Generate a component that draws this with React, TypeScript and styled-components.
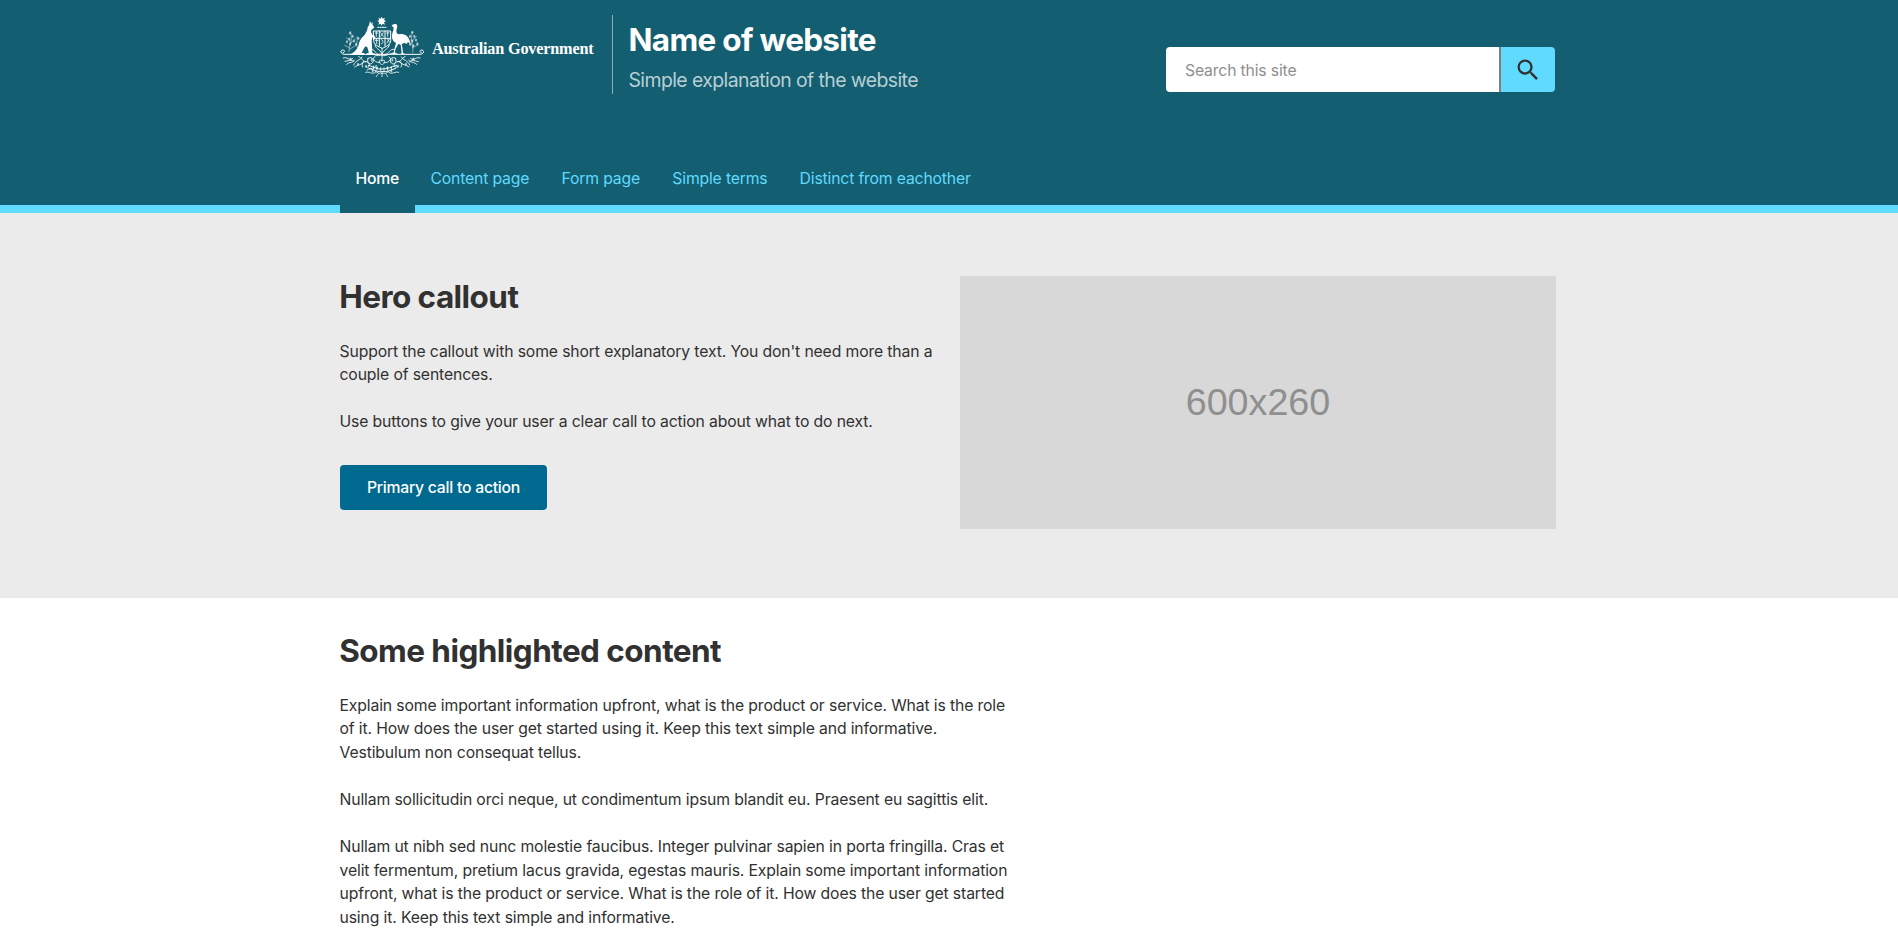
import React from 'react';
import styled, { createGlobalStyle } from 'styled-components';

const GlobalStyle = createGlobalStyle`
  *, *::before, *::after { box-sizing: border-box; }
  html, body { margin: 0; padding: 0; background: #fff; }
  body {
    height: 946px;
    overflow: hidden;
    color: #313131;
    font-family: Inter, 'Liberation Sans', sans-serif;
    font-size: 15.75px;
    line-height: 23.6px;
    letter-spacing: -0.135px;
  }
  h1, h2, p, ul { margin: 0; padding: 0; }
`;

const Container = styled.div`
  width: 1218px;
  margin: 0 auto;
  padding-right: 2px;
`;

const Header = styled.header`
  height: 213px;
  background: #135e70;
  border-bottom: 8px solid #61daff;
`;

const HeaderTop = styled.div`
  display: flex;
  justify-content: space-between;
  height: 148px;
  padding: 15px 1px 0 0;
`;

const Brand = styled.a`
  display: flex;
  align-items: flex-start;
  color: #fff;
  text-decoration: none;
`;

const CrestArt = styled.svg`
  display: block;
  flex: none;
  width: 86px;
  height: 64px;
  fill: #fff;
  stroke: #fff;
  stroke-linecap: round;
  stroke-linejoin: round;
`;

const GovernmentName = styled.span`
  width: 180px;
  margin-left: 6px;
  padding-top: 22px;
  font: bold 17.3px/24px 'Liberation Serif', serif;
  letter-spacing: -0.19px;
  white-space: nowrap;
  transform: scaleX(0.938);
  transform-origin: 0 0;
`;

const Titles = styled.div`
  height: 79.3px;
  padding: 4.8px 0 0 15.5px;
  border-left: 1px solid #89afb8;
  white-space: nowrap;
`;

const SiteName = styled.h1`
  font-size: 31.5px;
  line-height: 39.4px;
  font-weight: 700;
  letter-spacing: -0.7px;
`;

const Tagline = styled.p`
  margin-top: 6.4px;
  color: #b8cfd4;
  font-size: 19.4px;
  line-height: 29.5px;
  letter-spacing: -0.57px;
`;

const SearchForm = styled.form`
  display: flex;
  width: 389px;
  height: 45px;
  margin-top: 32px;
  border-radius: 4px;
  overflow: hidden;
`;

const SearchInput = styled.input`
  flex: 1;
  min-width: 0;
  padding: 2px 19px 0;
  border: 0;
  background: #fff;
  font: inherit;
  letter-spacing: -0.16px;
  &::placeholder { color: #8f8f8f; opacity: 1; }
`;

const SearchButton = styled.button`
  display: flex;
  align-items: center;
  justify-content: center;
  width: 56px;
  padding: 0;
  border: 0;
  border-left: 2px solid #808080;
  background: #61daff;
`;

const SearchIcon = styled.svg`
  width: 28px;
  height: 28px;
  fill: #313131;
`;

const Nav = styled.ul`
  display: flex;
  list-style: none;
`;

const NavItem = styled.li<{ $active?: boolean; $width: number }>`
  width: ${p => p.$width}px;
  height: ${p => (p.$active ? 65 : 57)}px;
  padding: 18.8px 0 0 15.5px;
  background: #135e70;
  color: ${p => (p.$active ? '#fff' : '#61daff')};
  font-weight: ${p => (p.$active ? 500 : 400)};
  letter-spacing: ${p => (p.$active ? -0.24 : -0.17)}px;
  white-space: nowrap;
`;

const Hero = styled.section`
  height: 385px;
  padding-top: 63px;
  background: #ebebeb;
`;

const HeroGrid = styled.div`
  display: grid;
  grid-template-columns: 596px 596px;
  column-gap: 24px;
`;

const HeroText = styled.div`
  padding-top: 0.6px;
`;

const Heading = styled.h2`
  margin: 0 0 23.7px -0.8px;
  font-size: 31.5px;
  line-height: 39.4px;
  font-weight: 700;
  letter-spacing: -0.55px;
`;

const Paragraph = styled.p`
  margin-left: -0.5px;
  white-space: nowrap;
  & + & { margin-top: 23.6px; }
`;

const ActionButton = styled.a`
  display: flex;
  align-items: center;
  justify-content: center;
  width: 207px;
  height: 45px;
  margin-top: 31px;
  padding-top: 0.6px;
  border-radius: 4px;
  background: #00698f;
  color: #fff;
  font-weight: 500;
  letter-spacing: -0.24px;
`;

const Placeholder = styled.div`
  display: flex;
  align-items: center;
  justify-content: center;
  height: 253.3px;
  background: #d8d8d8;
  color: #8f8f8f;
  font-family: 'Liberation Sans', Arial, sans-serif;
  font-size: 37.7px;
  letter-spacing: 0;
`;

const Content = styled.main`
  padding-top: 32.6px;
`;

const leafSpots = [
  [60, 82], [68, 92], [58, 100], [72, 106], [60, 115], [78, 116], [85, 98], [51, 108],
  [247, 80], [240, 92], [253, 92], [247, 106], [258, 103], [240, 116], [250, 120], [262, 114],
  [62, 160], [84, 176], [108, 182], [125, 163], [140, 186], [128, 196],
  [250, 160], [228, 176], [204, 182], [187, 163], [172, 186], [184, 196],
];

const Crest = () => (
  <CrestArt viewBox="30 28 258 192" aria-label="Coat of arms">
    <path stroke="none" d="M155 33l3 6 7-3-3 7 6 3-6 4 3 7-7-3-3 6-3-6-7 3 3-7-6-4 6-3-3-7 7 3z" />
    <path fill="none" strokeWidth="3" d="M143 65h25" strokeDasharray="4 3" />
    <path stroke="none" d="M120 46l4 8 3-6 1 10 5 7-5 5-4 2-1 7 4 8 7 4 3 8-3 3-6-8-3 10 1 17 1 20 9 4v3h-26l7-6-5-17-6-3-7 12-4 8h8v6H56c14-4 24-14 29-26 2-16 8-25 16-31 7-8 11-16 12-26l4-6z" />
    <path stroke="none" d="M185 61c2-5 9-8 14-5 4 3 3 8 1 14-2 8-1 13 5 16 13-3 24 1 30 10 3 5 4 11 6 17l-8-4-4 6-6-4-8 5 2 9 2 17 6 3h-13l3-3-3-25-7-2-8 14-3 13 5 3h-13l5-4 3-15 4-14c-8-4-13-12-12-22 0-9 5-14 5-23l-2-4z" />
    <g fill="none">
      <path strokeWidth="3" d="M131 76h51v29c0 12-14 18-25 23-12-5-26-11-26-23zM148 77v44M165 77v44M131 98h51" />
      <path strokeWidth="2.4" d="M136 82h7m-4-4v14m13-11l8 11m0-11l-8 11m18-10h7m-4-4v14M136 104h8m-4-4v14m14-12c7 1 7 10 0 13m18-15l6 9m0-9l-7 12" />
      <path strokeWidth="3" d="M45 146H269M43 146c-11 0-14-12-5-13 7-1 7 8 1 8M270 146c12 0 14-11 6-13-7-1-8 8-2 8" />
      <path strokeWidth="2" opacity=".75" d="M57 138c-1-22 12-25 5-60m-1 30L50 96m11 18 14-15M58 126l-14-7m14 12 20-12M83 128c-7-15 2-22-2-35M248 140c5-18-9-30-1-61m-2 28 14-15m-13 24-14-15m15 25 18-9m-23-15-12 12" />
      <path strokeWidth="2.6" d="M110 145c12-12 26 12 43 3 17 9 32-15 49-3M121 132c13-7 13 15 27 15m45-15c-14-7-15 15-29 15M156 128v38M135 117c3 15 13 11 20 27m23-27c-3 15-14 11-21 27" />
      <path strokeWidth="3" opacity=".88" d="M40 157c11-6 17 10 28 2m-23 8c10 0 14-8 26 0M50 176c9-9 18-3 24-13m-3 15c6-15 20-14 25-24M74 184c9-8 20-4 28-17M86 153c10 2 10 16 22 15M98 184c-8-13 8-22 18-12 7 7-2 17-8 11M114 158c12-8 21 6 13 14-8 7-18-1-13-14M111 193c14-8 19-1 28-14M135 153c-12 4 1 20 15 17M177 154c12 4-2 20-15 17M197 158c-12-8-21 6-13 14 8 7 18-1 13-14M213 184c8-13-8-22-18-12-7 7 2 17 8 11M225 153c-10 2-10 16-22 15M237 184c-9-8-20-4-28-17M260 176c-9-9-18-3-24-13m3 15c-6-15-20-14-25-24M270 157c-11-6-17 10-28 2m23 9c-10-1-14-8-26 0" />
      <path strokeWidth="3" d="M115 179c20 5 24 12 41 11 17 1 25-6 44-11M117 188c20 6 24 11 39 10 16 1 24-4 41-10" />
      <path strokeWidth="2.4" d="M131 181v9m10-6v9m11-7v9m10-9v9m11-10v8m11-10v8M154 177c-10-10-7-16 2-12 9-4 12 2 2 12M107 200c12-4 16 7 29 1M206 200c-12-4-16 7-29 1M156 198v15m-2-10c-10-3-12 5-15 10m19-10c10-3 12 5 15 10M145 202l-9-5m32 5 9-5" />
    </g>
    <g stroke="none" opacity=".65">
      {leafSpots.map(([x, y]) => (
        <ellipse key={`${x}-${y}`} cx={x} cy={y} rx="3" ry="4.5" />
      ))}
    </g>
  </CrestArt>
);

const navItems = [
  { label: 'Home', width: 75, active: true },
  { label: 'Content page', width: 131 },
  { label: 'Form page', width: 110.8 },
  { label: 'Simple terms', width: 127.3 },
  { label: 'Distinct from eachother', width: 203 },
];

export default function App() {
  return (
    <>
      <GlobalStyle />
      <Header>
        <Container>
          <HeaderTop>
            <Brand>
              <Crest />
              <GovernmentName>Australian Government</GovernmentName>
              <Titles>
                <SiteName>Name of website</SiteName>
                <Tagline>Simple explanation of the website</Tagline>
              </Titles>
            </Brand>
            <SearchForm>
              <SearchInput placeholder="Search this site" />
              <SearchButton type="button" aria-label="Search">
                <SearchIcon viewBox="0 0 24 24">
                  <path d="M15.5 14h-.79l-.28-.27A6.47 6.47 0 0 0 16 9.5 6.5 6.5 0 1 0 9.5 16c1.61 0 3.09-.59 4.23-1.57l.27.28v.79l5 4.99L20.49 19l-4.99-5zm-6 0C7.01 14 5 11.99 5 9.5S7.01 5 9.5 5 14 7.01 14 9.5 11.99 14 9.5 14z" />
                </SearchIcon>
              </SearchButton>
            </SearchForm>
          </HeaderTop>
          <Nav>
            {navItems.map(item => (
              <NavItem key={item.label} $active={item.active} $width={item.width}>
                {item.label}
              </NavItem>
            ))}
          </Nav>
        </Container>
      </Header>
      <Hero>
        <Container>
          <HeroGrid>
            <HeroText>
              <Heading>Hero callout</Heading>
              <Paragraph>
                Support the callout with some short explanatory text. You don't need more than a
                <br />
                couple of sentences.
              </Paragraph>
              <Paragraph>Use buttons to give your user a clear call to action about what to do next.</Paragraph>
              <ActionButton>Primary call to action</ActionButton>
            </HeroText>
            <Placeholder>600x260</Placeholder>
          </HeroGrid>
        </Container>
      </Hero>
      <Content>
        <Container>
          <Heading>Some highlighted content</Heading>
          <Paragraph>
            Explain some important information upfront, what is the product or service. What is the role
            <br />
            of it. How does the user get started using it. Keep this text simple and informative.
            <br />
            Vestibulum non consequat tellus.
          </Paragraph>
          <Paragraph>
            Nullam sollicitudin orci neque, ut condimentum ipsum blandit eu. Praesent eu sagittis elit.
          </Paragraph>
          <Paragraph>
            Nullam ut nibh sed nunc molestie faucibus. Integer pulvinar sapien in porta fringilla. Cras et
            <br />
            velit fermentum, pretium lacus gravida, egestas mauris. Explain some important information
            <br />
            upfront, what is the product or service. What is the role of it. How does the user get started
            <br />
            using it. Keep this text simple and informative.
          </Paragraph>
        </Container>
      </Content>
    </>
  );
}
